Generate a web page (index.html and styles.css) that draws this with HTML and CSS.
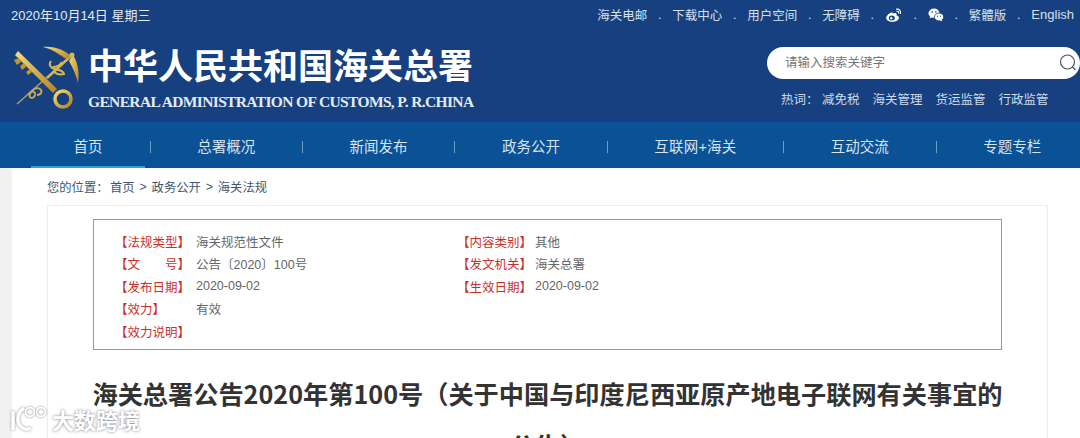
FILE: index.html
```html
<!DOCTYPE html>
<html lang="zh-CN">
<head>
    <meta charset="UTF-8">
    <meta name="viewport" content="width=device-width, initial-scale=1.0">
    <title>海关总署公告2020年第100号</title>
    <link rel="stylesheet" href="styles.css">
</head>
<body>
    <header class="header">
        <div class="topbar">
            <span class="date">2020年10月14日 星期三</span>
            <div class="toplinks">
                <a>海关电邮</a><i>.</i>
                <a>下载中心</a><i>.</i>
                <a>用户空间</a><i>.</i>
                <a>无障碍</a><i>.</i>
                <a class="icon-link">
                    <svg width="18" height="16" viewBox="0 0 18 16">
                        <path d="M7 5.200C4.200 6.100 1.200 8.600 1.200 11c0 2.300 3 3.900 6 3.900 3.700 0 6.800-2 6.800-4.200 0-1.500-1.500-2-2.400-2.300.5-1.500-.1-2.400-1.500-2.400-.9 0-2 .5-2.600.9.300-.9.200-2-.5-1.700z" fill="#fff"/>
                        <ellipse cx="6.800" cy="11" rx="3" ry="2.500" fill="#16407f"/>
                        <circle cx="6.300" cy="11.300" r="1.200" fill="#fff"/>
                        <path d="M11.500 2.200c2.500-.6 4.700 1.500 3.900 4.300M12 4.300c1.200-.2 1.900.6 1.600 1.800" fill="none" stroke="#fff" stroke-width="1.200" stroke-linecap="round"/>
                    </svg>
                </a><i>.</i>
                <a class="icon-link">
                    <svg width="16" height="14" viewBox="0 0 16 14">
                        <ellipse cx="6" cy="5.200" rx="5.500" ry="4.700" fill="#fff"/>
                        <path d="M2.500 8l-.8 2.300L5 9z" fill="#fff"/>
                        <ellipse cx="11" cy="9" rx="4.600" ry="3.900" fill="#fff" stroke="#16407f" stroke-width=".8"/>
                        <path d="M13.500 11.500l.6 2-2.200-1.200z" fill="#fff"/>
                        <circle cx="4.200" cy="4" r=".8" fill="#16407f"/>
                        <circle cx="7.800" cy="4" r=".8" fill="#16407f"/>
                        <circle cx="9.500" cy="8.200" r=".6" fill="#16407f"/>
                        <circle cx="12.500" cy="8.200" r=".6" fill="#16407f"/>
                    </svg>
                </a><i>.</i>
                <a>繁體版</a><i>.</i>
                <a class="english">English</a>
            </div>
        </div>

        <div class="brand-row">
            <svg class="logo" width="70" height="68" viewBox="0 0 70 68">
                <defs>
                    <linearGradient id="gold" x1="0" y1="0" x2="1" y2="1">
                        <stop offset="0" stop-color="#f6dc78"/>
                        <stop offset="1" stop-color="#b5831c"/>
                    </linearGradient>
                </defs>
                <!-- staff, snakes, wings -->
                <path d="M6 59L61 10" stroke="#a89c72" stroke-width="1.500" fill="none"/>
                <path d="M36 33L61 10" stroke="#d8b24c" stroke-width="2.500" fill="none"/>
                <path d="M17 50c3-5 8-4 7 0s-7 4-5-1 7-7 10-5 1 6-3 6" stroke="#c9ab55" stroke-width="1.800" fill="none"/>
                <path d="M40 16c-3 4 0 7 4 8s8 1 9 5c-4 1-8 0-11-3M51 17c-2 3-6 5-9 5" stroke="#d9b650" stroke-width="2" fill="none"/>
                <path d="M60 11C54 6 45 1 32 2c8 2 13 5 17 8 3 1 3 3 7 4z" fill="url(#gold)"/>
                <path d="M62 10c4 6 7 16 5 28-2-8-5-15-9-22z" fill="url(#gold)"/>
                <circle cx="61" cy="10" r="2.500" fill="#d9b650"/>
                <!-- key -->
                <path d="M4 10l3-4 39 38-4 4z" fill="url(#gold)"/>
                <path d="M3 15l5-2 2 4-4 3zM9 21l4-3 2 4-4 3zM15 27l4-3 2 3-4 3z" fill="#c4962b"/>
                <circle cx="52" cy="54" r="8" fill="none" stroke="url(#gold)" stroke-width="3.500"/>
            </svg>
            <div class="brand-text">
                <div class="brand-cn">中华人民共和国海关总署</div>
                <div class="brand-en">GENERAL ADMINISTRATION OF CUSTOMS, P. R.CHINA</div>
            </div>
            <div class="search-col">
                <div class="search-box">
                    <input type="text" placeholder="请输入搜索关键字">
                    <svg width="18" height="18" viewBox="0 0 18 18">
                        <circle cx="8.500" cy="8" r="7" fill="none" stroke="#4b5563" stroke-width="1.200"/>
                        <path d="M13.500 13l3 3" stroke="#4b5563" stroke-width="1.200"/>
                    </svg>
                </div>
                <div class="hot-words">
                    <span class="hot-label">热词：</span>
                    <a>减免税</a>
                    <a>海关管理</a>
                    <a>货运监管</a>
                    <a>行政监管</a>
                </div>
            </div>
        </div>

        <nav class="nav">
            <a class="nav-item first active">首页</a><i></i>
            <a class="nav-item">总署概况</a><i></i>
            <a class="nav-item">新闻发布</a><i></i>
            <a class="nav-item">政务公开</a><i></i>
            <a class="nav-item wide">互联网+海关</a><i></i>
            <a class="nav-item">互动交流</a><i></i>
            <a class="nav-item last">专题专栏</a>
        </nav>
    </header>

    <main class="content">
        <div class="crumbs">
            <span>您的位置：</span><a>首页</a><b>&gt;</b><a>政务公开</a><b>&gt;</b><a>海关法规</a>
        </div>
        <div class="card">
            <div class="info">
                <span class="label">【法规类型】</span><span>海关规范性文件</span>
                <span class="label">【内容类别】</span><span>其他</span>
                <span class="label">【文&emsp;&emsp;号】</span><span>公告〔2020〕100号</span>
                <span class="label">【发文机关】</span><span>海关总署</span>
                <span class="label">【发布日期】</span><span>2020-09-02</span>
                <span class="label">【生效日期】</span><span>2020-09-02</span>
                <span class="label">【效力】</span><span>有效</span>
                <span></span><span></span>
                <span class="label">【效力说明】</span><span></span>
            </div>
            <h1>海关总署公告2020年第100号（关于中国与印度尼西亚原产地电子联网有关事宜的公告）</h1>
        </div>
    </main>

    <div class="watermark">
        <svg width="38" height="28" viewBox="0 0 38 28">
            <path d="M3 6v19M14 3C7 8 7 15 9 19s7 7 12 4" fill="none" stroke="#fff" stroke-width="3.500"/>
            <circle cx="20" cy="7" r="4.500" fill="none" stroke="#fff" stroke-width="1.800"/>
            <circle cx="31" cy="7" r="4.500" fill="none" stroke="#fff" stroke-width="1.800"/>
        </svg>
        <span>大数跨境</span>
    </div>
</body>
</html>
```

FILE: styles.css
```css
html, body {
  height: 438px;
  overflow: hidden;
}
body {
  margin: 0;
  padding: 0;
  background-color: #fff;
  color: #555;
  font-family: "Liberation Sans", "Noto Sans CJK SC", sans-serif;
}
a {
  color: inherit;
  text-decoration: none;
}
i {
  font-style: normal;
}

/* header */
.header {
  background-color: #16407f;
  color: #fff;
}
.topbar {
  display: flex;
  justify-content: space-between;
  align-items: center;
  height: 29px;
  padding: 0 6px 0 11px;
  font-size: 12.5px;
}
.date {
  font-size: 13px;
  color: #e4ebf5;
}
.toplinks {
  display: flex;
  align-items: center;
  color: #d5e0ee;
}
.toplinks i {
  width: 25px;
  text-align: center;
  line-height: 12px;
}
.icon-link {
  display: flex;
}
.english {
  font-size: 13px;
}

.brand-row {
  display: flex;
  height: 93px;
}
.logo {
  flex: none;
  margin: 16px 0 0 11px;
}
.brand-text {
  margin-left: 7px;
}
.brand-cn {
  margin-top: 12px;
  font-family: "Noto Sans CJK SC", sans-serif;
  font-size: 35px;
  font-weight: 700;
  line-height: 46px;
  white-space: nowrap;
}
.brand-en {
  margin-top: 6px;
  font-family: "Liberation Serif", serif;
  font-size: 15.5px;
  font-weight: 700;
  line-height: 18px;
  letter-spacing: -0.64px;
  color: #e3ebf5;
  white-space: nowrap;
}
.search-col {
  width: 313px;
  margin-left: auto;
}
.search-box {
  display: flex;
  align-items: center;
  height: 32px;
  margin-top: 18px;
  padding: 0 3px 0 18px;
  background-color: #fff;
  border-radius: 16px;
}
.search-box input {
  flex: 1;
  border: none;
  outline: none;
  padding: 0;
  font-family: inherit;
  font-size: 12.5px;
}
.search-box input::placeholder {
  color: #777;
}
.hot-words {
  display: flex;
  gap: 13px;
  margin: 12px 0 0 14px;
  font-size: 12.5px;
  line-height: 18px;
  color: #cfdbea;
}
.hot-label {
  margin-right: -4px;
  width: 32px;
  white-space: nowrap;
}

.nav {
  display: flex;
  align-items: center;
  height: 46px;
  padding-left: 31px;
  background-color: #0b5195;
  font-size: 14.5px;
  color: #d7e4f1;
  overflow: hidden;
}
.nav i {
  flex: none;
  width: 1px;
  height: 12px;
  margin-top: 4px;
  background-color: #6f9cc7;
}
.nav-item {
  flex: none;
  display: flex;
  align-items: center;
  height: 100%;
  padding: 0 46.7px;
  box-sizing: border-box;
  white-space: nowrap;
}
.nav-item.first {
  width: 114px;
  margin-right: 4.5px;
  padding: 0;
  justify-content: center;
}
.nav-item.wide {
  letter-spacing: 0.2px;
}
.nav-item.last {
  padding-right: 0;
}
.nav-item.active {
  padding-top: 2px;
  border-bottom: 2px solid #3aa0d8;
}

/* content */
.content {
  border-left: 12px solid #f1f1f1;
  height: 270px;
  padding-left: 35px;
  background-color: #fff;
}
.crumbs {
  display: flex;
  align-items: center;
  height: 37px;
  font-size: 12.3px;
  color: #44566e;
}
.crumbs span {
  width: 63px;
  white-space: nowrap;
}
.crumbs b {
  width: 17px;
  font-weight: 400;
  text-align: center;
}
.card {
  width: 1001px;
  height: 233px;
  box-sizing: border-box;
  padding: 13px 45px 0;
  border: 1px solid #eee;
  border-bottom: none;
  overflow: hidden;
}
.info {
  display: grid;
  grid-template-columns: 75px 255px 72px 1fr;
  column-gap: 6px;
  grid-auto-rows: 22.5px;
  align-items: center;
  height: 131px;
  box-sizing: border-box;
  padding: 10px 21px 0;
  border: 1px solid #999;
  font-size: 12.5px;
  color: #666;
}
.label {
  color: #c9302c;
  white-space: nowrap;
}
h1 {
  margin: 17px -6px 0;
  font-family: "Noto Sans CJK SC", sans-serif;
  font-size: 25.2px;
  font-weight: 700;
  line-height: 52px;
  text-align: center;
  color: #333;
}

/* overlay watermark from the image host */
.watermark {
  position: absolute;
  left: 10px;
  top: 403px;
  display: flex;
  align-items: center;
  gap: 4px;
  font-family: "Noto Sans CJK SC", sans-serif;
  font-size: 22px;
  font-weight: 700;
  color: #fff;
  text-shadow: 0 0 3px #777;
}
.watermark svg {
  filter: drop-shadow(0 0 1px #888);
}
```
